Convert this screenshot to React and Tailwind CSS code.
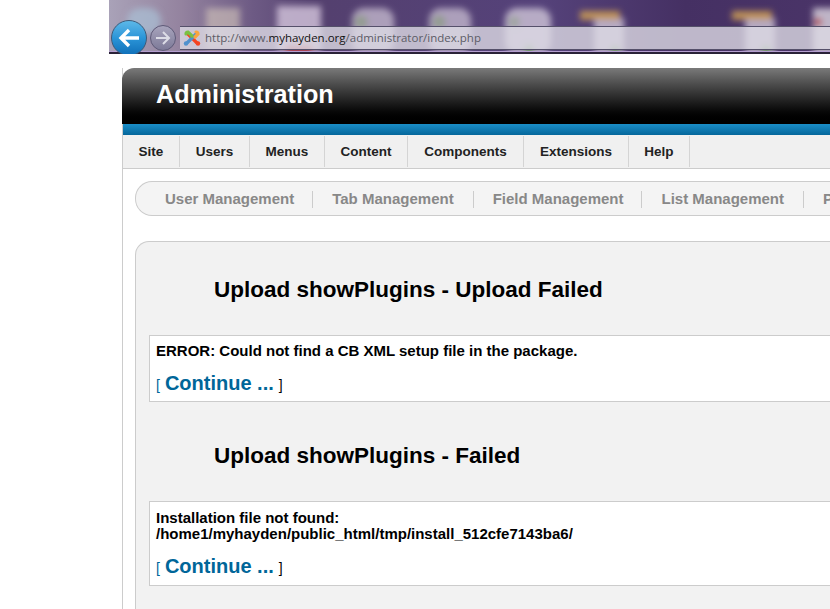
const menu = [["Site","w-[57px]"],["Users","w-[70px]"],["Menus","w-[75px]"],["Content","w-[83px]"],["Components","w-[116px]"],["Extensions","w-[105px]"],["Help","w-[61px]"]];
const sub = [["User Management","pl-[29px] pr-[18px]"],["Tab Management","px-[19px]"],["Field Management","pl-[19px] pr-[18px]"],["List Management","px-[19px]"],["Plugin Management","px-[19px]"]];

function Continue() {
  return (
    <p className="mt-[12px] leading-[24px] text-[14px] font-normal text-[#006699] flex items-baseline gap-[5px]">
      <span className="text-[#006699]">[</span>
      <a className="text-[20px] font-bold text-[#006699]">Continue ...</a>
      <span className="text-black">]</span>
    </p>
  );
}

function Chrome() {
  return (
    <div className="relative h-[54px] ml-[109px] overflow-hidden bg-[#4a3468]">
      <svg className="absolute inset-0" width="721" height="54" viewBox="0 0 721 54">
        <defs>
          <linearGradient id="g" x1="0" x2="1" y1="0" y2="0">
            <stop offset="0" stopColor="#a9a2b8" />
            <stop offset="0.1" stopColor="#94839f" />
            <stop offset="0.2" stopColor="#6d5a84" />
            <stop offset="0.3" stopColor="#54406f" />
            <stop offset="0.6" stopColor="#55427a" />
            <stop offset="0.8" stopColor="#453063" />
            <stop offset="1" stopColor="#4a3468" />
          </linearGradient>
          <filter id="b"><feGaussianBlur stdDeviation="3" /></filter>
        </defs>
        <rect width="721" height="54" fill="url(#g)" />
        <g filter="url(#b)">
          <rect x="18" y="8" width="34" height="26" rx="13" fill="#a9c0d6" opacity="0.7" />
          <rect x="97" y="8" width="34" height="42" fill="#d5c8bd" opacity="0.6" />
          <rect x="168" y="6" width="44" height="46" fill="#cdbdd6" opacity="0.85" />
          <rect x="176" y="44" width="28" height="10" fill="#b33a4a" />
          <rect x="243" y="8" width="42" height="46" rx="12" fill="#c9bfd2" opacity="0.75" />
          <circle cx="252" cy="22" r="7" fill="#7c9a6a" opacity="0.5" />
          <rect x="320" y="8" width="42" height="46" rx="12" fill="#c9bfd2" opacity="0.75" />
          <circle cx="330" cy="22" r="7" fill="#7c9a6a" opacity="0.5" />
          <rect x="396" y="8" width="46" height="46" rx="12" fill="#cfc6d8" opacity="0.8" />
          <circle cx="405" cy="22" r="6" fill="#7c9a6a" opacity="0.4" />
          <rect x="485" y="18" width="30" height="36" fill="#cfc6d8" opacity="0.8" />
          <rect x="471" y="11" width="40" height="9" fill="#c99a55" opacity="0.9" />
          <rect x="636" y="18" width="30" height="36" fill="#cfc6d8" opacity="0.8" />
          <rect x="623" y="11" width="40" height="9" fill="#c99a55" opacity="0.9" />
          <rect x="704" y="8" width="30" height="46" fill="#d4cbd8" opacity="0.85" />
          <circle cx="709" cy="22" r="4" fill="#b33a4a" />
          <circle cx="506" cy="50" r="5" fill="#5e9a45" />
          <circle cx="657" cy="50" r="5" fill="#5e9a45" />
          <circle cx="420" cy="50" r="5" fill="#5e9a45" />
        </g>
      </svg>
      {/* address bar */}
      <div className="absolute left-[71px] right-0 top-[26px] h-[24px] border-y border-[#55506a] bg-[#dcd9e3]/80 flex items-center">
        <svg className="ml-[3px] shrink-0" width="18" height="18" viewBox="0 0 18 18" fill="none" strokeLinecap="round">
          <path d="M4 4 L14 14" stroke="#f44321" strokeWidth="3.2" />
          <path d="M14 4 L4 14" stroke="#5091cd" strokeWidth="3.2" />
          <path d="M3 5 Q3 3 5 3 L9 7" stroke="#7ac143" strokeWidth="3.2" />
          <path d="M13 3 Q15 3 15 5 L12 8" stroke="#f9a541" strokeWidth="3.2" />
          <circle cx="3" cy="14.5" r="2.2" fill="#5091cd" />
          <circle cx="15" cy="14.5" r="2.2" fill="#f44321" />
        </svg>
        <span className="ml-[4px] text-[11.5px] text-[#5c5c66] whitespace-nowrap" style={{ fontFamily: '"Open Sans", sans-serif' }}>
          http://www.<span className="text-[#111]">myhayden.org</span>/administrator/index.php
        </span>
      </div>
      <div className="absolute left-0 right-0 top-[51px] h-[1px] bg-[#b59fd0]" />
      <div className="absolute left-0 right-0 top-[52px] h-[2px] bg-[#2a2238]" />
      {/* back */}
      <div className="absolute left-[2px] top-[20px] w-[36px] h-[36px] rounded-full border border-[#3d5a78] bg-gradient-to-b from-[#5cb8e8] via-[#2a95d8] to-[#0f6fb8] flex items-center justify-center">
        <svg width="24" height="20" viewBox="0 0 24 20" fill="none" stroke="#fff" strokeWidth="3.4">
          <path d="M22 10H4M12 2L4 10L12 18" />
        </svg>
      </div>
      {/* forward */}
      <div className="absolute left-[41px] top-[25px] w-[26px] h-[26px] rounded-full border border-[#5e5a78] bg-gradient-to-b from-[#a8a4bc] to-[#7d7a98] flex items-center justify-center">
        <svg width="16" height="14" viewBox="0 0 16 14" fill="none" stroke="#dcdce6" strokeWidth="2">
          <path d="M1 7H14M8 1L14 7L8 13" />
        </svg>
      </div>
    </div>
  );
}

export default function App() {
  return (
    <div className="w-[830px] h-[609px] overflow-hidden bg-white" style={{ fontFamily: '"Liberation Sans", Arial, sans-serif' }}>
      <Chrome />
      <div className="ml-[122px] mt-[14px] w-[800px] h-[541px] border-l border-[#cccccc]">
        <div className="-ml-[1px] h-[56px] rounded-tl-[12px] bg-gradient-to-b from-[#7a7a7a] via-[#2e2e2e] to-[#000000] pl-[34px] flex items-center">
          <h1 className="text-[25.2px] font-bold text-white leading-none pb-[3px]">Administration</h1>
        </div>
        <div className="h-[11px] bg-gradient-to-b from-[#1a8ec8] to-[#05679b]" />
        <nav className="h-[34px] pt-[1px] bg-[#f0f0f0] border-b border-[#cccccc] flex">
          {menu.map(([t, w]) => (
            <div key={t} className={`${w} h-[31px] border-r border-[#d4d4d4] flex items-center justify-center pt-[1px] text-[13.5px] font-bold text-[#222222]`}>{t}</div>
          ))}
        </nav>
        <div className="ml-[12px] mt-[12px] h-[35px] rounded-l-[17px] border border-r-0 border-[#cccccc] bg-[#f4f4f4] flex items-center whitespace-nowrap pt-[1px]">
          {sub.map(([t, p], i) => (
            <div key={t} className={`${p} h-[17px] flex items-center text-[15px] font-bold text-[#888888] ${i < sub.length - 1 ? "border-r border-[#cccccc]" : ""}`}>{t}</div>
          ))}
        </div>
        <main className="ml-[12px] mt-[25px] h-[400px] rounded-tl-[14px] border border-r-0 border-b-0 border-[#cccccc] bg-[#f2f2f2] pl-[13px]">
          <h2 className="pl-[65px] pt-[33px] h-[93px] text-[22.5px] leading-[30px] font-bold text-black">Upload showPlugins - Upload Failed</h2>
          <div className="h-[67px] bg-white border border-r-0 border-[#cccccc] pl-[6px] pt-[7px]">
            <p className="text-[15px] leading-[16px] font-bold text-black">ERROR: Could not find a CB XML setup file in the package.</p>
            <Continue />
          </div>
          <h2 className="pl-[65px] pt-[39px] h-[99px] text-[22.5px] leading-[30px] font-bold text-black">Upload showPlugins - Failed</h2>
          <div className="h-[85px] bg-white border border-r-0 border-[#cccccc] pl-[6px] pt-[8px]">
            <p className="text-[15px] leading-[16px] font-bold text-black">Installation file not found:<br />/home1/myhayden/public_html/tmp/install_512cfe7143ba6/</p>
            <Continue />
          </div>
        </main>
      </div>
    </div>
  );
}
